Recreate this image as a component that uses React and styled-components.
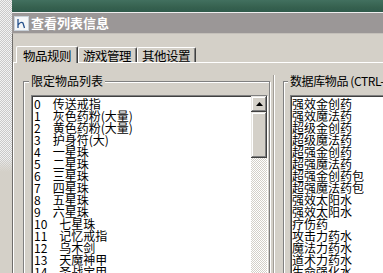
import React from "react";
import styled, { createGlobalStyle } from "styled-components";

const GlobalStyle = createGlobalStyle`
  html, body {
    margin: 0;
    padding: 0;
    background: #d4d0c8;
  }
  body {
    font-family: "Noto Sans CJK SC", "Liberation Sans", sans-serif;
    font-size: 12px;
    color: #000;
  }
`;

const Screen = styled.div`
  display: flex;
  width: 383px;
  height: 273px;
  overflow: hidden;
`;

const Backdrop = styled.div`
  flex: none;
  width: 12px;
  background:
    linear-gradient(to bottom, transparent 158px, #d4d0c8 172px),
    repeating-conic-gradient(#c9c9c9 0 25%, #f2f2f2 0 50%) 0 0 / 2px 2px;
`;

const Window = styled.div`
  flex: 1;
  min-width: 0;
  display: flex;
  flex-direction: column;
`;

const Desktop = styled.div`
  flex: none;
  height: 12px;
  background: linear-gradient(180deg, #42705f 0%, #36614f 60%, #2f5a4c 100%);
  border-bottom: 1px solid #eeeeee;
`;

const TitleBar = styled.div`
  flex: none;
  height: 20px;
  display: flex;
  align-items: center;
  gap: 2px;
  padding-left: 2px;
  background: #9b9797;
`;

const Title = styled.span`
  color: #ffffff;
  font-weight: bold;
  font-size: 13px;
  line-height: 14px;
`;

const Body = styled.div`
  flex: 1;
  display: flex;
  flex-direction: column;
  border-left: 1px solid #6f6d6a;
  border-top: 1px solid #c4c0ba;
  background: #d4d0c8;
`;

const TabRow = styled.div`
  display: flex;
  align-items: flex-end;
  height: 17px;
  padding: 11px 0 0 5px;
`;

const Tab = styled.div`
  height: ${(p) => (p.$active ? 17 : 15)}px;
  line-height: ${(p) => (p.$active ? 17 : 15)}px;
  padding: ${(p) => (p.$active ? "0 6px" : "0 5px 0 4px")};
  margin-left: ${(p) => (p.$active ? "-2px" : "0")};
  box-sizing: border-box;
  border-top: 1px solid #ffffff;
  border-left: 1px solid #ffffff;
  border-right: 1px solid #404040;
  border-radius: 2px 2px 0 0;
  box-shadow: inset -1px 0 #808080;
  background: #d4d0c8;
  font-size: 12.5px;
  letter-spacing: -0.5px;
  white-space: nowrap;
  position: relative;
  z-index: ${(p) => (p.$active ? 1 : 0)};
  margin-bottom: ${(p) => (p.$active ? "-1px" : "0")};
`;

const Panel = styled.div`
  flex: 1;
  display: flex;
  align-items: flex-start;
  border-top: 1px solid #ffffff;
  border-left: 1px solid #ffffff;
  padding: 12px 0 0 9px;
`;

const Group = styled.fieldset`
  flex: none;
  box-sizing: border-box;
  width: ${(p) => p.$width}px;
  margin: 0;
  padding: 8px 1px 0 ${(p) => p.$pad}px;
  min-width: 0;
  border: 1px solid #808080;
  box-shadow: inset 1px 1px #ffffff, 1px 1px #ffffff;
`;

const Legend = styled.legend`
  padding: 0 2px;
  margin-left: -2px;
  line-height: 12px;
  letter-spacing: ${(p) => (p.$tight ? "-0.4px" : "0")};
  background: #d4d0c8;
  white-space: nowrap;
`;

const Divider = styled.div`
  flex: none;
  align-self: stretch;
  width: 1px;
  margin: 0 8px 0 3px;
  background: #a19d97;
  border-right: 1px solid #ffffff;
`;

const ListBox = styled.div`
  display: flex;
  height: 200px;
  border: 1px solid;
  border-color: #808080 #ffffff #ffffff #808080;
  box-shadow: inset 1px 1px #404040;
  background: #ffffff;
`;

const Items = styled.div`
  flex: 1;
  padding: 2px 0 0 ${(p) => p.$pad}px;
`;

const Row = styled.div`
  display: flex;
  height: 12px;
  line-height: 12px;
  white-space: nowrap;
`;

const Name = styled.span`
  margin-left: ${(p) => (p.$gap ? 12 : 0)}px;
`;

const ScrollBar = styled.div`
  flex: none;
  width: 16px;
  display: flex;
  flex-direction: column;
  background: repeating-conic-gradient(#d4d0c8 0 25%, #ffffff 0 50%) 0 0 / 2px 2px;
`;

const ScrollPart = styled.div`
  flex: none;
  height: ${(p) => p.$h}px;
  display: flex;
  align-items: center;
  justify-content: center;
  background: #d4d0c8;
  box-shadow: inset -1px -1px #404040, inset 1px 1px #e8e6e2, inset -2px -2px #808080,
    inset 2px 2px #ffffff;
`;

const Icon = () => (
  <svg width="15" height="15" viewBox="0 0 15 15">
    <rect x="0.5" y="0.5" width="14" height="14" fill="#f4f6f8" stroke="#c8d0d8" />
    <path d="M4 3 V12 M4 9 Q7 5 9 7 L10.5 12" fill="none" stroke="#24508c" strokeWidth="1.3" />
  </svg>
);

const UpArrow = () => (
  <svg width="7" height="4" viewBox="0 0 7 4">
    <path d="M3.5 0 L7 4 H0 Z" fill="#000" />
  </svg>
);

const limited = [
  "传送戒指",
  "灰色药粉(大量)",
  "黄色药粉(大量)",
  "护身符(大)",
  "一星珠",
  "二星珠",
  "三星珠",
  "四星珠",
  "五星珠",
  "六星珠",
  "七星珠",
  "记忆戒指",
  "乌木剑",
  "天魔神甲",
  "圣战宝甲",
];

const database = [
  "强效金创药",
  "强效魔法药",
  "超级金创药",
  "超级魔法药",
  "超强金创药",
  "超强魔法药",
  "超强金创药包",
  "超强魔法药包",
  "强效太阳水",
  "强效太阳水",
  "疗伤药",
  "攻击力药水",
  "魔法力药水",
  "道术力药水",
  "生命强化水",
];

export default function App() {
  return (
    <>
      <GlobalStyle />
      <Screen>
        <Backdrop />
        <Window>
          <Desktop />
          <TitleBar>
            <Icon />
            <Title>查看列表信息</Title>
          </TitleBar>
          <Body>
            <TabRow>
              <Tab $active>物品规则</Tab>
              <Tab>游戏管理</Tab>
              <Tab>其他设置</Tab>
            </TabRow>
            <Panel>
              <Group $width={247} $pad={7}>
                <Legend>限定物品列表</Legend>
                <ListBox>
                  <Items $pad={2}>
                    {limited.map((name, i) => (
                      <Row key={i}>
                        <span>{i}</span>
                        <Name $gap>{name}</Name>
                      </Row>
                    ))}
                  </Items>
                  <ScrollBar>
                    <ScrollPart $h={16}>
                      <UpArrow />
                    </ScrollPart>
                    <ScrollPart $h={46} />
                  </ScrollBar>
                </ListBox>
              </Group>
              <Divider />
              <Group $width={200} $pad={6}>
                <Legend $tight>数据库物品 (CTRL-F 查找)</Legend>
                <ListBox>
                  <Items $pad={1}>
                    {database.map((name, i) => (
                      <Row key={i}>
                        <Name>{name}</Name>
                      </Row>
                    ))}
                  </Items>
                </ListBox>
              </Group>
            </Panel>
          </Body>
        </Window>
      </Screen>
    </>
  );
}
